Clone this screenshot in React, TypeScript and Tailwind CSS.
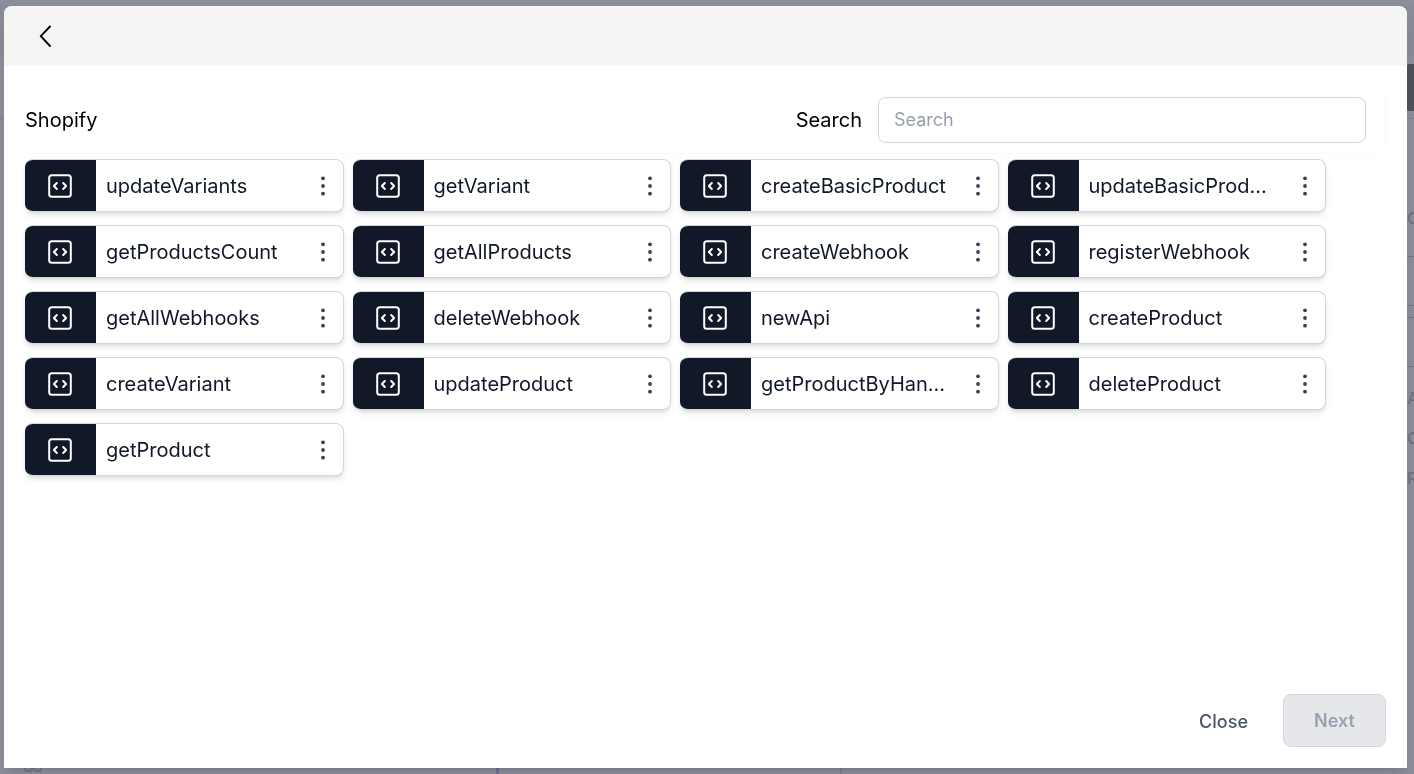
import { useState } from "react";

type IconProps = { className?: string };

const METHODS = [
  "updateVariants",
  "getVariant",
  "createBasicProduct",
  "updateBasicProduct",
  "getProductsCount",
  "getAllProducts",
  "createWebhook",
  "registerWebhook",
  "getAllWebhooks",
  "deleteWebhook",
  "newApi",
  "createProduct",
  "createVariant",
  "updateProduct",
  "getProductByHandle",
  "deleteProduct",
  "getProduct",
];

function ChevronIcon({ className }: IconProps) {
  return (
    <svg viewBox="0 0 12 22" fill="none" stroke="currentColor" strokeWidth="1.9" className={className} aria-hidden>
      <path d="M11 1.5 1.8 11.2 11 21" strokeLinecap="round" strokeLinejoin="round" />
    </svg>
  );
}

function CodeIcon({ className }: IconProps) {
  return (
    <svg viewBox="0 0 24 24" fill="none" stroke="currentColor" className={className} aria-hidden>
      <rect x="1.2" y="1.2" width="21.6" height="21.6" rx="2.6" strokeWidth="2" />
      <path
        d="M8.8 9 5.9 12l2.9 3M15.2 9l2.9 3-2.9 3"
        strokeWidth="2"
        strokeLinecap="round"
        strokeLinejoin="round"
      />
    </svg>
  );
}

function DotsIcon({ className }: IconProps) {
  return (
    <svg viewBox="0 0 4 20" fill="currentColor" className={className} aria-hidden>
      <circle cx="2" cy="2.3" r="1.9" />
      <circle cx="2" cy="10" r="1.9" />
      <circle cx="2" cy="17.7" r="1.9" />
    </svg>
  );
}

function MethodCard({ name }: { name: string }) {
  return (
    <li className="flex h-[53px] min-w-0 items-start overflow-hidden rounded-lg border border-l-0 border-gray-300 bg-white shadow-md">
      <span className="flex h-full w-[71px] shrink-0 items-center justify-center bg-[#111827] pr-px text-white">
        <CodeIcon className="size-6" />
      </span>
      <span className="min-w-0 flex-1 truncate pr-2 pl-2.5 text-xl leading-[53px] text-gray-900">{name}</span>
      <button
        type="button"
        aria-label={`Options for ${name}`}
        className="flex h-full w-10 shrink-0 items-center justify-center text-gray-700"
      >
        <DotsIcon className="h-5 w-1" />
      </button>
    </li>
  );
}

// Editor page that stays dimmed while the dialog is open
function EditorPage() {
  return (
    <div className="flex h-screen flex-col overflow-hidden bg-[#8b8f9b] text-[#717585]" aria-hidden>
      <div className="h-[5px] shrink-0" />
      <div className="h-[52px] shrink-0 bg-[#8a8b99]" />
      <div className="flex h-[62px] shrink-0 items-center justify-end border-b border-[#7e828f]">
        <div className="h-[47px] w-2 rounded-l-sm bg-[#4e5158]" />
      </div>
      <div className="flex min-h-0 flex-1 justify-between">
        <div className="flex flex-1 items-end">
          <svg viewBox="0 0 16 16" fill="none" stroke="currentColor" strokeWidth="1.5" className="mb-0.5 ml-6 size-[18px]">
            <rect x="1" y="1" width="6" height="6" rx="1" />
            <rect x="9" y="1" width="6" height="6" rx="1" />
            <rect x="1" y="9" width="6" height="6" rx="1" />
            <rect x="9" y="9" width="6" height="6" rx="1" />
          </svg>
          <div className="ml-[454px] h-5 w-[346px] border-r-2 border-l-[3px] border-r-[#837f96] border-l-[#73709c]" />
        </div>
        <div className="flex w-[7px] flex-col overflow-hidden text-base font-bold">
          <span className="mt-[87px] leading-6">C</span>
          <span className="mt-[26px] h-[50px] w-full shrink-0 border-y border-[#717585]" />
          <span className="mt-[11px] h-[50px] w-full shrink-0 border-y border-[#717585]" />
          <span className="mt-[19px] leading-6">A</span>
          <span className="mt-4 leading-6">C</span>
          <span className="mt-4 leading-6">R</span>
        </div>
      </div>
    </div>
  );
}

export default function App() {
  const [query, setQuery] = useState("");
  const visible = METHODS.filter((name) => name.toLowerCase().includes(query.toLowerCase()));

  return (
    <div className="font-['Inter',sans-serif]">
      <EditorPage />
      <div className="fixed inset-0 flex pt-1.5 pr-[7px] pb-1.5 pl-1">
        <div
          role="dialog"
          aria-modal="true"
          aria-labelledby="dialog-title"
          className="flex min-w-0 flex-1 flex-col overflow-hidden rounded-t-lg bg-white shadow-lg"
        >
          <header className="flex h-[60px] shrink-0 items-center bg-[#f5f5f3] px-[21px]">
            <button
              type="button"
              aria-label="Back"
              className="flex size-10 items-center justify-center rounded-full bg-gray-100 text-black"
            >
              <ChevronIcon className="h-[22px] w-3" />
            </button>
          </header>

          <div className="flex min-h-0 flex-1 flex-col overflow-y-auto px-[21px] pt-5">
            <div className="flex h-[68px] shrink-0 items-center justify-between rounded-lg border border-t-0 border-l-0 border-gray-50 pr-[19px]">
              <h2 id="dialog-title" className="text-xl text-black">
                Shopify
              </h2>
              <div className="flex items-center gap-4">
                <label htmlFor="search" className="text-xl text-black">
                  Search
                </label>
                <input
                  id="search"
                  type="text"
                  value={query}
                  onChange={(e) => setQuery(e.target.value)}
                  placeholder="Search"
                  className="h-[46px] w-[488px] rounded-lg border border-gray-300 bg-white px-[15px] text-lg text-gray-900 outline-none placeholder:text-gray-400"
                />
              </div>
            </div>

            <ul className="mt-[5px] mr-[60px] grid grid-cols-4 gap-x-[9px] gap-y-[13px]">
              {visible.map((name) => (
                <MethodCard key={name} name={name} />
              ))}
            </ul>
          </div>

          <footer className="flex shrink-0 items-center justify-end gap-[35px] px-[21px] pb-[21px]">
            <button type="button" className="pt-0.5 text-lg font-medium text-gray-600">
              Close
            </button>
            <button
              type="button"
              disabled
              className="h-[53px] w-[103px] rounded-lg border border-gray-300 bg-gray-200 text-lg font-semibold text-gray-400"
            >
              Next
            </button>
          </footer>
        </div>
      </div>
    </div>
  );
}
